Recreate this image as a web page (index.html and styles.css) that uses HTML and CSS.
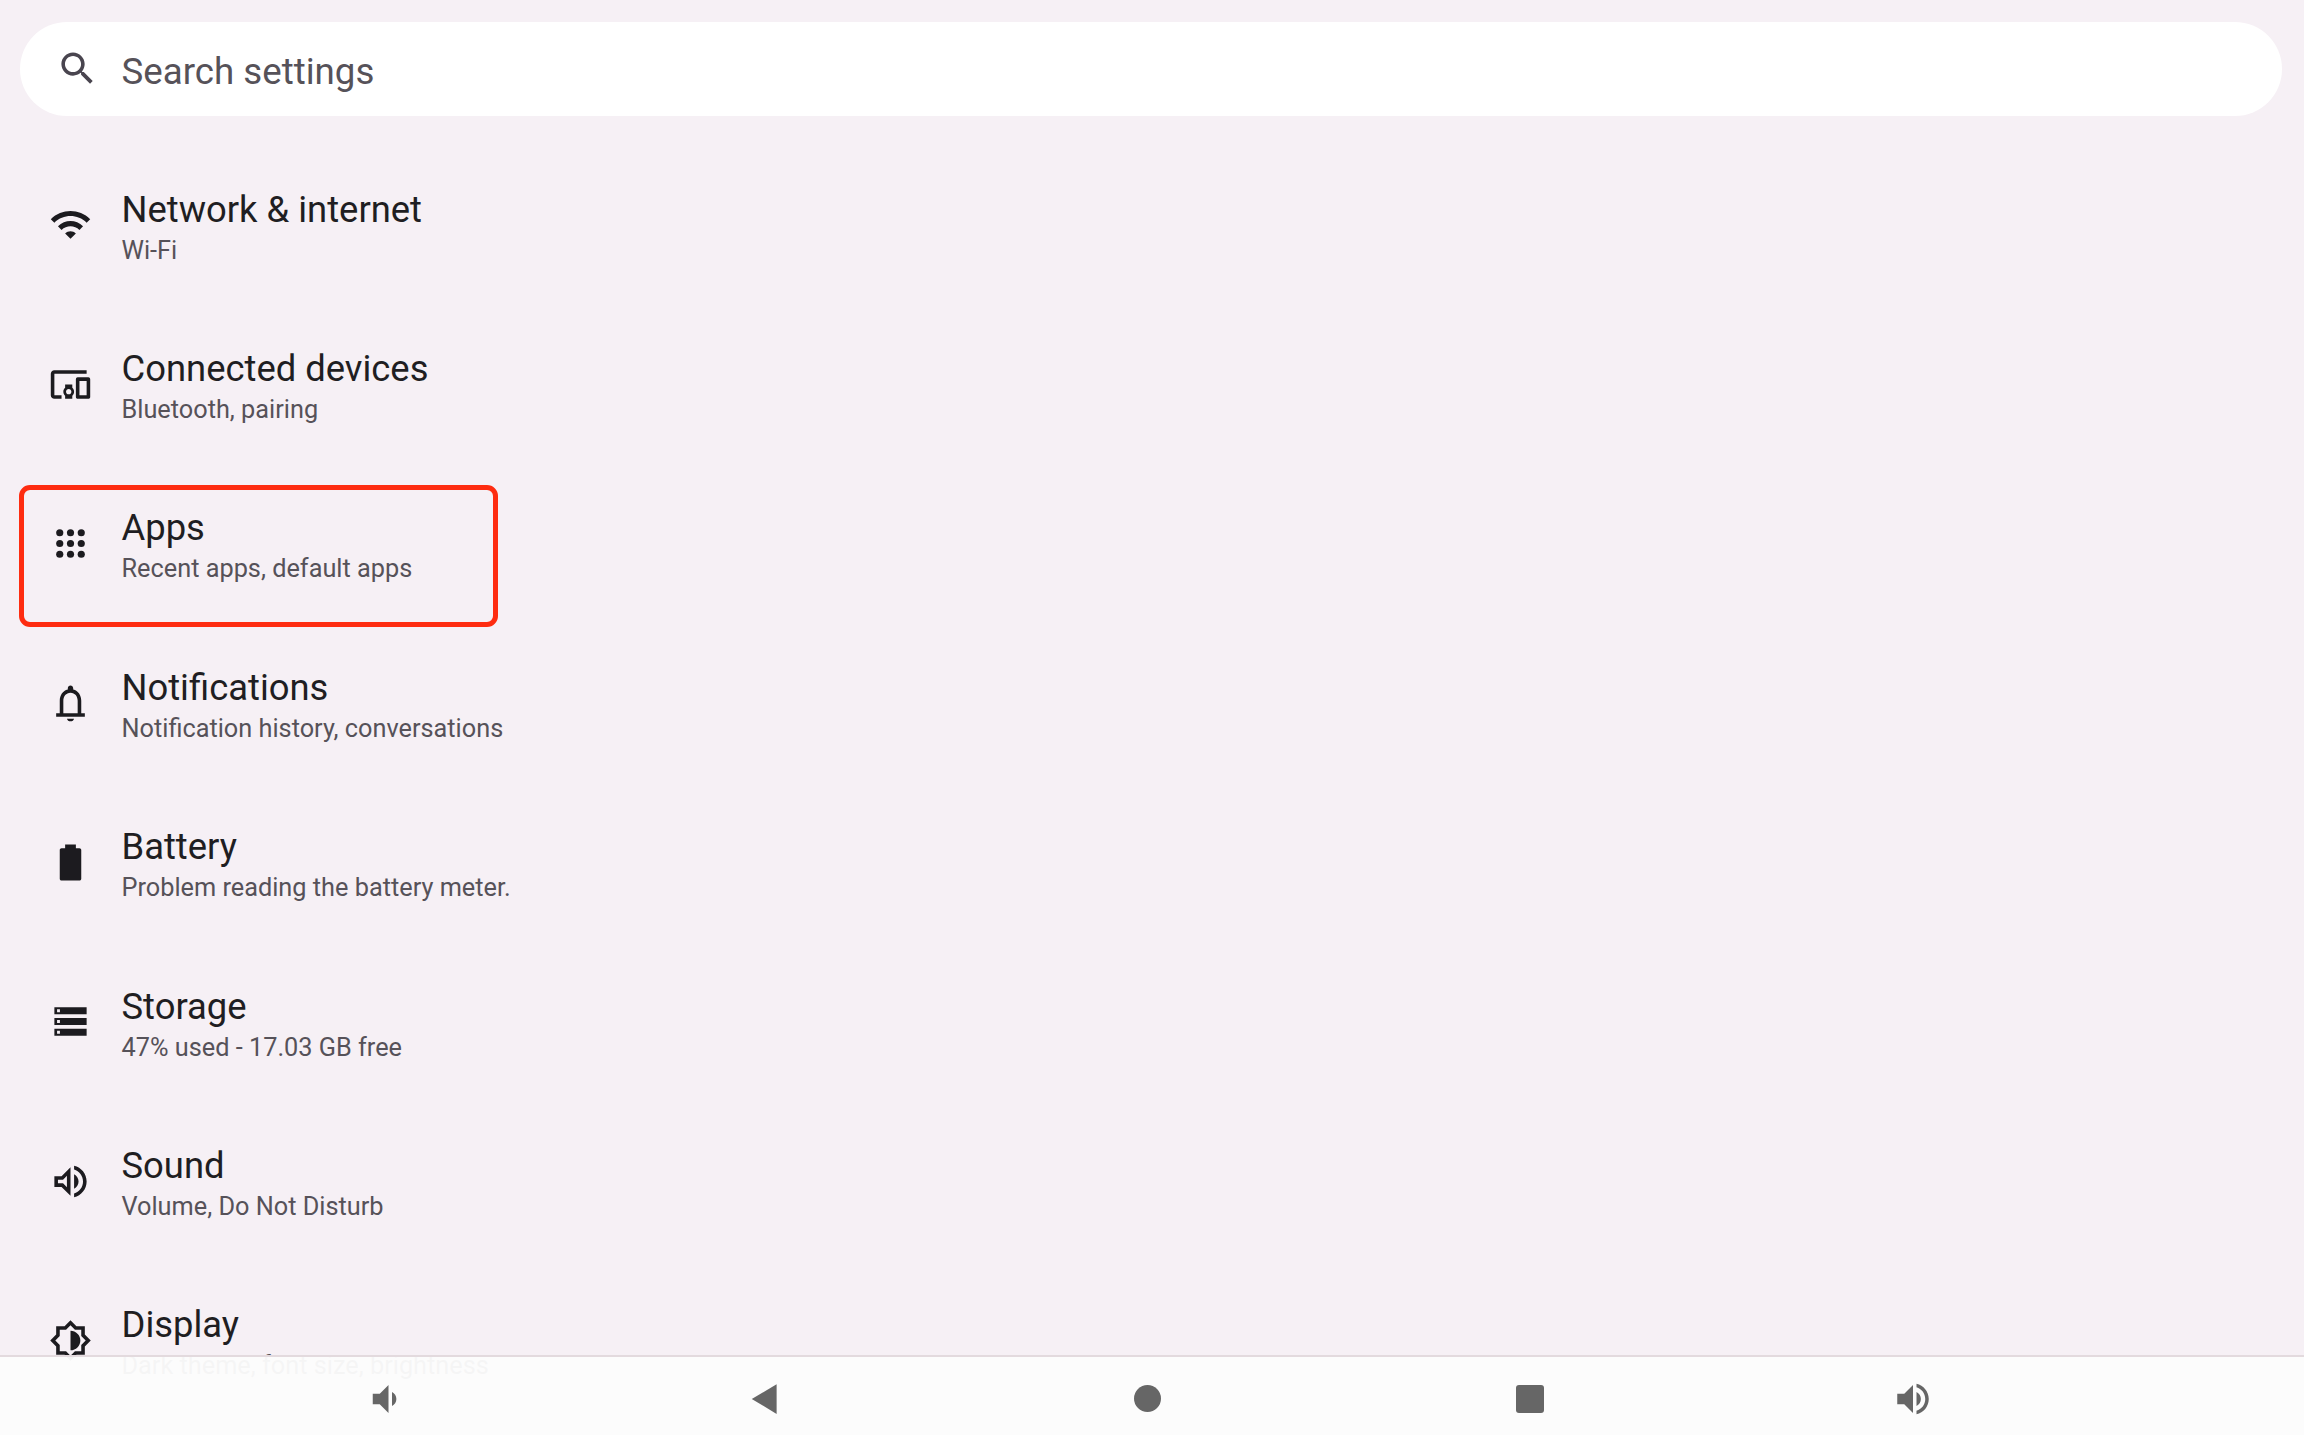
FILE: index.html
```html
<!DOCTYPE html>
<html lang="en">
<head>
<meta charset="utf-8">
<title>Settings</title>
<link rel="stylesheet" href="styles.css">
</head>
<body>
<div class="screen">
  <header class="search">
    <svg class="search-icon" viewBox="0 0 24 24"><path d="M15.5 14h-.79l-.28-.27C15.41 12.59 16 11.11 16 9.5 16 5.91 13.09 3 9.5 3S3 5.91 3 9.5 5.91 16 9.5 16c1.61 0 3.09-.59 4.23-1.57l.27.28v.79l5 4.99L20.49 19l-4.99-5zm-6 0C7.01 14 5 11.99 5 9.5S7.01 5 9.5 5 14 7.01 14 9.5 11.99 14 9.5 14z"/></svg>
    <span class="search-text">Search settings</span>
  </header>
  <main class="list">
    <div class="row">
      <svg class="row-icon" viewBox="0 0 24 24"><path d="M1 9l2 2c4.97-4.97 13.03-4.97 18 0l2-2C16.93 2.93 7.08 2.93 1 9zm8 8l3 3 3-3c-1.65-1.66-4.34-1.66-6 0zm-4-4l2 2c2.76-2.76 7.24-2.76 10 0l2-2C15.14 9.14 8.87 9.14 5 13z"/></svg>
      <div class="row-text"><div class="title">Network &amp; internet</div><div class="sub">Wi-Fi</div></div>
    </div>
    <div class="row">
      <svg class="row-icon" viewBox="0 0 24 24"><path d="M3 6h18V4H3c-1.1 0-2 .9-2 2v12c0 1.1.9 2 2 2h4v-2H3V6zm10 6H9v1.78c-.61.55-1 1.33-1 2.22s.39 1.67 1 2.22V20h4v-1.78c.61-.55 1-1.34 1-2.22s-.39-1.67-1-2.22V12zm-2 5.5c-.83 0-1.5-.67-1.5-1.5s.67-1.5 1.5-1.5 1.5.67 1.5 1.5-.67 1.5-1.5 1.5zM22 8h-6c-.5 0-1 .5-1 1v10c0 .5.5 1 1 1h6c.5 0 1-.5 1-1V9c0-.5-.5-1-1-1zm-1 10h-4v-8h4v8z"/></svg>
      <div class="row-text"><div class="title">Connected devices</div><div class="sub">Bluetooth, pairing</div></div>
    </div>
    <div class="row">
      <svg class="row-icon" viewBox="0 0 24 24"><circle cx="6" cy="6" r="2"/><circle cx="12" cy="6" r="2"/><circle cx="18" cy="6" r="2"/><circle cx="6" cy="12" r="2"/><circle cx="12" cy="12" r="2"/><circle cx="18" cy="12" r="2"/><circle cx="6" cy="18" r="2"/><circle cx="12" cy="18" r="2"/><circle cx="18" cy="18" r="2"/></svg>
      <div class="row-text"><div class="title">Apps</div><div class="sub">Recent apps, default apps</div></div>
      <div class="highlight"></div>
    </div>
    <div class="row">
      <svg class="row-icon" viewBox="0 0 24 24"><path d="M18 18v-7c0-3.07-1.63-5.64-4.5-6.32V4c0-.83-.67-1.5-1.5-1.5s-1.5.67-1.5 1.5v.68C7.64 5.36 6 7.92 6 11v7H4v2h16v-2h-2zm-2 0H8v-7c0-2.48 1.51-4.5 4-4.5s4 2.02 4 4.5v7zM10 21c.2.9 1 1.5 2 1.5s1.8-.6 2-1.5z"/></svg>
      <div class="row-text"><div class="title">Notifications</div><div class="sub">Notification history, conversations</div></div>
    </div>
    <div class="row">
      <svg class="row-icon" viewBox="0 0 24 24"><path d="M15 4V2H9v2H7c-.55 0-1 .45-1 1v16c0 .55.45 1 1 1h10c.55 0 1-.45 1-1V5c0-.55-.45-1-1-1z"/></svg>
      <div class="row-text"><div class="title">Battery</div><div class="sub">Problem reading the battery meter.</div></div>
    </div>
    <div class="row">
      <svg class="row-icon" viewBox="0 0 24 24"><path fill-rule="evenodd" d="M3 4h18v4H3zM4.500 5.200v1.600h1.600V5.200zM3 10h18v4H3zM4.500 11.200v1.600h1.600v-1.600zM3 16h18v4H3zM4.500 17.200v1.600h1.600v-1.600z"/></svg>
      <div class="row-text"><div class="title">Storage</div><div class="sub">47% used - 17.03 GB free</div></div>
    </div>
    <div class="row">
      <svg class="row-icon" viewBox="0 0 24 24"><path d="M3 9v6h4l5 5V4L7 9H3zm7-.17v6.34L7.83 13H5v-2h2.83L10 8.83zM16.500 12c0-1.770-1.020-3.290-2.500-4.030v8.050c1.480-.73 2.500-2.250 2.500-4.020zM14 3.230v2.060c2.890.86 5 3.540 5 6.710s-2.110 5.850-5 6.710v2.060c4.010-.91 7-4.490 7-8.770 0-4.280-2.990-7.860-7-8.770z"/></svg>
      <div class="row-text"><div class="title">Sound</div><div class="sub">Volume, Do Not Disturb</div></div>
    </div>
    <div class="row">
      <svg class="row-icon" viewBox="0 0 24 24"><path d="M20 15.310 23.310 12 20 8.690V4h-4.690L12 .69 8.690 4H4v4.690L.69 12 4 15.310V20h4.690L12 23.310 15.310 20H20v-4.690zM18 14.480V18h-3.520L12 20.480 9.520 18H6v-3.520L3.520 12 6 9.520V6h3.520L12 3.520 14.480 6H18v3.520L20.480 12 18 14.480zM12 6.500v11c3.030 0 5.500-2.470 5.500-5.500S15.030 6.500 12 6.500z"/></svg>
      <div class="row-text"><div class="title">Display</div><div class="sub">Dark theme, font size, brightness</div></div>
    </div>
  </main>
  <nav class="navbar">
    <div class="nav-slot"><svg class="nav-icon" viewBox="0 0 24 24"><path d="M18.500 12c0-1.770-1.020-3.290-2.500-4.030v8.050c1.480-.73 2.500-2.250 2.500-4.020zM5 9v6h4l5 5V4L9 9H5z"/></svg></div>
    <div class="nav-slot"><svg class="nav-icon" viewBox="0 0 24 24"><path d="M17.500 3.500v17L3.300 12z"/></svg></div>
    <div class="nav-slot"><div class="nav-circle"></div></div>
    <div class="nav-slot"><div class="nav-square"></div></div>
    <div class="nav-slot"><svg class="nav-icon" viewBox="0 0 24 24"><path d="M3 9v6h4l5 5V4L7 9H3zm13.500 3c0-1.770-1.020-3.290-2.500-4.030v8.050c1.480-.73 2.500-2.250 2.500-4.020zM14 3.230v2.060c2.890.86 5 3.540 5 6.710s-2.110 5.850-5 6.710v2.060c4.010-.91 7-4.490 7-8.770s-2.990-7.860-7-8.770z"/></svg></div>
  </nav>
</div>
</body>
</html>
```
FILE: styles.css
```css
* { box-sizing: border-box; }
html, body { margin: 0; padding: 0; }
body {
  width: 2304px;
  height: 1435px;
  overflow: hidden;
  background: #f6f0f5;
  font-family: Roboto, "Liberation Sans", sans-serif;
}
.screen {
  position: relative;
  width: 2304px;
  height: 1435px;
  overflow: hidden;
  display: flex;
  flex-direction: column;
  padding-top: 22px;
}
.search {
  flex: none;
  height: 94px;
  margin: 0 22px 0 20px;
  padding-left: 36px;
  display: flex;
  align-items: center;
  background: #fff;
  border-radius: 47px;
}
.search-icon {
  width: 43px;
  height: 43px;
  margin-top: -2px;
  fill: #49454f;
  flex: none;
}
.search-text {
  margin-left: 22.5px;
  margin-top: 4px;
  font-size: 36.7px;
  color: #565259;
}
.list {
  flex: none;
  margin-top: 29px;
}
.row {
  position: relative;
  height: 159.4px;
  padding-left: 49px;
  display: flex;
  align-items: center;
}
.row-icon {
  width: 43px;
  height: 43px;
  fill: #1c1b1f;
  flex: none;
}
.row-text {
  margin-left: 29.5px;
  margin-top: 10px;
}
.title {
  font-size: 36.4px;
  line-height: 42px;
  color: #1f1e22;
}
.sub {
  font-size: 25.3px;
  line-height: 40px;
  color: #565259;
}
.highlight {
  position: absolute;
  left: 19px;
  top: 21.5px;
  width: 479px;
  height: 142px;
  border: 5px solid #fe2c10;
  border-radius: 11px;
}
.navbar {
  position: absolute;
  left: 0;
  right: 0;
  bottom: 0;
  height: 80px;
  padding: 0 200px 0 194px;
  display: grid;
  grid-template-columns: repeat(5, 382px);
  background: rgba(252, 252, 252, 0.96);
  border-top: 2px solid #e3dade;
}
.nav-slot {
  display: flex;
  align-items: center;
  justify-content: center;
  padding-top: 5px;
}
.nav-icon {
  width: 42px;
  height: 42px;
  fill: #666;
}
.nav-circle {
  width: 27px;
  height: 27px;
  margin-right: 3px;
  border-radius: 50%;
  background: #666;
}
.nav-square {
  width: 28px;
  height: 28px;
  margin-right: 2px;
  border-radius: 3px;
  background: #666;
}
```
